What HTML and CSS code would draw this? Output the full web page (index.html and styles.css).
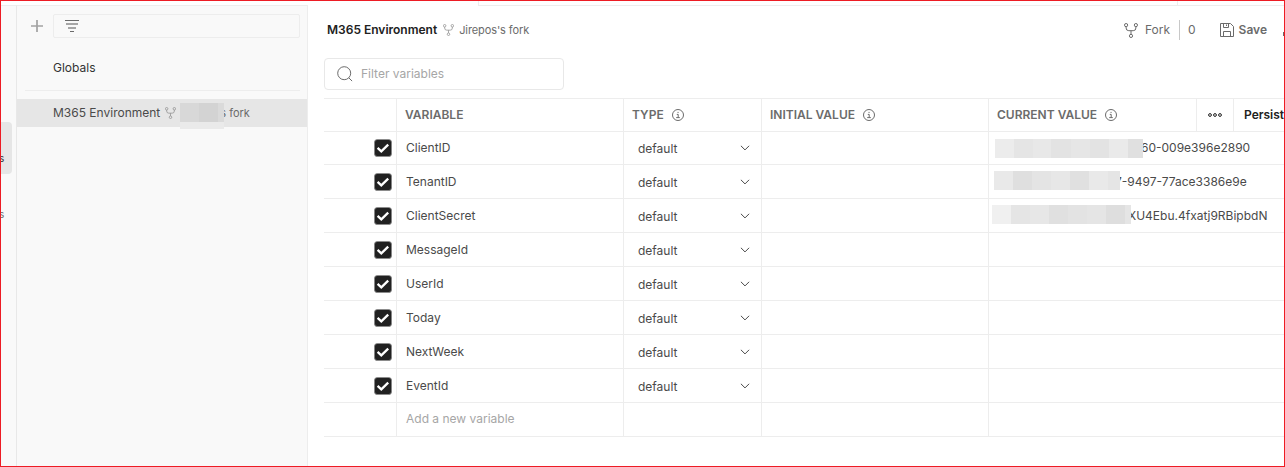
FILE: index.html
```html
<!DOCTYPE html>
<html lang="en">
<head>
<meta charset="utf-8">
<title>M365 Environment</title>
<link rel="stylesheet" href="styles.css">
</head>
<body>
<svg class="defs" aria-hidden="true">
  <symbol id="fork" viewBox="0 0 14 15"><g fill="none" stroke="currentColor"><circle cx="2.1" cy="2.1" r="1.6"/><circle cx="11.9" cy="2.1" r="1.6"/><circle cx="7" cy="12.9" r="1.6"/><path d="M2.1 3.7v1.3q0 2.7 2.7 2.7h4.4q2.7 0 2.7-2.7V3.7M7 7.7v3.6"/></g></symbol>
  <symbol id="info" viewBox="0 0 12 12"><g fill="none" stroke="currentColor"><circle cx="6" cy="6" r="5.5"/><path d="M4.8 5.4h1.4v3M4.2 8.6h3.6"/><path d="M5.5 3.4h1.1"/></g></symbol>
  <symbol id="chevron" viewBox="0 0 10 6"><path d="M.9.8 5 4.9 9.1.8" fill="none" stroke="currentColor"/></symbol>
  <symbol id="check" viewBox="0 0 18 18"><rect x=".4" y=".4" width="17.2" height="17.2" rx="3.2" fill="#212121" stroke="#8b8b8b" stroke-width=".8"/><path d="M3.6 8.9 7.3 12.4 14.2 5.6" fill="none" stroke="#fff" stroke-width="2.3"/></symbol>
</svg>
<div class="app">
  <aside class="rail">
    <div class="rail-item active">s</div>
    <div class="rail-item">s</div>
  </aside>
  <nav class="sidebar">
    <div class="tools">
      <svg class="plus" viewBox="0 0 12 12"><path d="M6 0v12M0 6h12" stroke="#a2a2a2" stroke-width="1.7"/></svg>
      <div class="side-filter"><svg width="14" height="12" viewBox="0 0 14 12"><path d="M0 .5h14M5 11.5h4" stroke="#6b6b6b"/><path d="M1 4h12M3 8h8" stroke="#a6a6a6" stroke-width="2"/></svg></div>
    </div>
    <div class="globals">Globals</div>
    <div class="env"><span>M365 Environment</span><svg class="fork-sm"><use href="#fork"/></svg><span class="fork-name">s fork</span>
      <div class="mask side-mask"><i class="a"></i><i class="b"></i><i class="c"></i></div></div>
  </nav>
  <main class="main">
    <div class="tabs"><div class="tab current"></div><div class="tab wide"></div><div class="tab rest"></div></div>
    <header class="head">
      <h1>M365 Environment</h1><svg class="fork-sm"><use href="#fork"/></svg><span class="owner">Jirepos's fork</span>
      <div class="actions">
        <svg class="fork-lg"><use href="#fork"/></svg><span class="fork-label">Fork</span><span class="count">0</span>
        <svg class="save-icon" viewBox="0 0 14 14"><path d="M.5.5h10L13.5 3.5v10H.5zM3.5.5v4h5v-4M3.5 13.5v-5h7v5M6.5 1.5v1.5" fill="none" stroke="#6b6b6b"/></svg><b>Save</b>
        <span class="sliver"></span>
      </div>
    </header>
    <div class="search"><svg viewBox="0 0 16 16"><circle cx="7.2" cy="7.2" r="6.5"/><path d="m11.8 11.8 3.3 3.3"/></svg>Filter variables</div>
    <section class="table">
      <div class="row header"><div></div><div>VARIABLE</div><div>TYPE<svg class="info"><use href="#info"/></svg></div><div>INITIAL VALUE<svg class="info"><use href="#info"/></svg></div><div class="last">CURRENT VALUE<svg class="info"><use href="#info"/></svg><span class="more"><svg width="14" height="4" viewBox="0 0 14 4" fill="none" stroke="#212121"><circle cx="2" cy="2" r="1.4"/><circle cx="7" cy="2" r="1.4"/><circle cx="12" cy="2" r="1.4"/></svg></span><span class="persist">Persist</span></div></div>
      <div class="row first"><div class="tick"><svg><use href="#check"/></svg></div><div class="name">ClientID</div><div class="type">default<svg><use href="#chevron"/></svg></div><div></div><div class="value v1"><span>60-009e396e2890</span><div class="mask"></div></div></div>
      <div class="row"><div class="tick"><svg><use href="#check"/></svg></div><div class="name">TenantID</div><div class="type">default<svg><use href="#chevron"/></svg></div><div></div><div class="value v2"><span>7-9497-77ace3386e9e</span><div class="mask"></div></div></div>
      <div class="row"><div class="tick"><svg><use href="#check"/></svg></div><div class="name">ClientSecret</div><div class="type">default<svg><use href="#chevron"/></svg></div><div></div><div class="value v3"><span>XU4Ebu.4fxatj9RBipbdN</span><div class="mask"></div></div></div>
      <div class="row"><div class="tick"><svg><use href="#check"/></svg></div><div class="name">MessageId</div><div class="type">default<svg><use href="#chevron"/></svg></div><div></div><div></div></div>
      <div class="row"><div class="tick"><svg><use href="#check"/></svg></div><div class="name">UserId</div><div class="type">default<svg><use href="#chevron"/></svg></div><div></div><div></div></div>
      <div class="row"><div class="tick"><svg><use href="#check"/></svg></div><div class="name">Today</div><div class="type">default<svg><use href="#chevron"/></svg></div><div></div><div></div></div>
      <div class="row"><div class="tick"><svg><use href="#check"/></svg></div><div class="name">NextWeek</div><div class="type">default<svg><use href="#chevron"/></svg></div><div></div><div></div></div>
      <div class="row"><div class="tick"><svg><use href="#check"/></svg></div><div class="name">EventId</div><div class="type">default<svg><use href="#chevron"/></svg></div><div></div><div></div></div>
      <div class="row"><div></div><div class="name add">Add a new variable</div><div></div><div></div><div></div></div>
    </section>
  </main>
</div>
</body>
</html>
```
FILE: styles.css
```css
* { box-sizing: border-box; }
body { margin: 0; font: 12px/16px Inter, "Liberation Sans", sans-serif; color: #4a4a4a; background: #fff; }
svg { display: block; flex: none; }
.defs { position: absolute; width: 0; height: 0; }
.app { display: flex; width: 1285px; height: 467px; border: 1px solid #ed1c24; overflow: hidden; }
.rail { width: 16px; margin-top: 4px; border-top: 1px solid #ededed; border-right: 1px solid #e8e8e8; background: #f9f9f9; padding-top: 116px; flex: none; }
.rail-item { height: 52px; width: 11px; padding-top: 29px; font-size: 10px; line-height: 14px; text-indent: -2px; overflow: hidden; color: #6b6b6b; }
.rail-item.active { background: #e6e6e6; border-radius: 0 4px 4px 0; color: #333; }
.rail-item + .rail-item { margin-top: 4px; }
.sidebar { width: 291px; flex: none; margin-top: 4px; border-top: 1px solid #ededed; border-right: 1px solid #ededed; background: #f9f9f9; }
.tools { display: flex; align-items: center; padding: 8px 7px 0 14px; }
.plus { width: 12px; height: 12px; margin-right: 10px; }
.side-filter { flex: 1; height: 24px; border: 1px solid #ededed; border-radius: 2px; padding: 5px 11px; }
.globals { margin: 0 7px 0 8px; padding: 22px 0 14px 28px; height: 53px; border-bottom: 1px solid #ededed; color: #333; }
.env { position: relative; display: flex; align-items: center; height: 28px; margin-top: 8px; padding-left: 36px; background: #e6e6e6; }
.fork-sm { width: 11px; height: 12px; margin-left: 5px; color: #929292; }
.fork-name { margin-left: 44px; font-size: 11px; color: #6b6b6b; }
.mask { position: absolute; }
.side-mask { left: 163px; top: 4px; width: 44px; height: 26px; display: flex; background: #eaeaea; }
.side-mask i { height: 19px; }
.side-mask .a { width: 19px; background: #d8d8d8; }
.side-mask .b { width: 19px; background: #d3d3d3; }
.side-mask .c { width: 6px; background: #dadada; }
.main { flex: 1; min-width: 0; }
.tabs { display: flex; height: 5px; }
.tab.current { width: 171px; border-right: 1px solid #ededed; }
.tab.wide { width: 699px; border-right: 1px solid #ededed; border-bottom: 1px solid #ededed; }
.tab.rest { flex: 1; border-bottom: 1px solid #ededed; }
.head { display: flex; align-items: center; height: 48px; padding-left: 19px; }
h1 { margin: 0; font-size: 12px; font-weight: 600; color: #212121; }
.head > .fork-sm { margin-left: 6px; }
.owner { margin-left: 5px; font-size: 11px; letter-spacing: -.1px; color: #6b6b6b; }
.actions { display: flex; align-items: center; margin-left: auto; color: #6b6b6b; }
.fork-lg { width: 14px; height: 15px; margin-right: 7px; }
.count { margin-left: 9px; padding: 2px 0 2px 8px; border-left: 1px solid #c8c8c8; }
.save-icon { width: 14px; height: 14px; margin-left: 24px; margin-right: 5px; }
.actions b { font-weight: 600; }
.sliver { width: 1px; height: 4px; margin: 8px 0 0 16px; background: #6b6b6b; }
.search { display: flex; align-items: center; width: 240px; height: 32px; margin: 4px 0 8px 16px; padding-left: 12px; border: 1px solid #e8e8e8; border-radius: 4px; color: #a6a6a6; }
.search svg { width: 16px; height: 16px; margin-right: 8px; fill: none; stroke: #6b6b6b; }
.table { margin-left: 16px; border-top: 1px solid #ededed; }
.row { display: grid; grid-template-columns: 73px 227px 138px 227px 1fr; height: 34px; border-bottom: 1px solid #ededed; }
.row.header, .row.first { height: 33px; }
.row > div { display: flex; align-items: center; min-width: 0; border-right: 1px solid #ededed; white-space: nowrap; }
.row > div:last-child { border-right: 0; }
.row.header > div { padding-left: 8px; font-weight: 600; color: #6b6b6b; }
.info { width: 12px; height: 12px; margin-left: 8px; }
.row .tick { padding-left: 50px; }
.tick svg { width: 18px; height: 18px; }
.row .name { padding-left: 9px; }
.row .add { padding-bottom: 2px; color: #a6a6a6; }
.row .type { padding: 2px 11px 0 14px; justify-content: space-between; }
.row.first .type { padding-top: 1px; }
.type svg { width: 10px; height: 6px; margin-bottom: 1px; }
.row .last { align-items: stretch; line-height: 32px; }
.last .info { align-self: center; }
.more { width: 38px; margin-left: auto; border: solid #ededed; border-width: 0 1px; display: flex; align-items: center; justify-content: center; }
.persist { width: 50px; padding-left: 10px; color: #212121; }
.row .value { position: relative; }
.value .mask { height: 19px; }
.v1 span { margin-left: 152px; }
.v2 span { margin-left: 126px; }
.v3 span { margin-left: 139px; }
.v1 .mask { left: 6px; top: 7px; width: 148px; background: linear-gradient(90deg, #ececec 0 19px, #e5e5e5 19px 38px, #e8e8e8 38px 56px, #e3e3e3 56px 76px, #e6e6e6 76px 95px, #e3e3e3 95px 114px, #eaeaea 114px 133px, #e0e0e0 133px); }
.v2 .mask { left: 5px; top: 6px; width: 126px; background: linear-gradient(90deg, #e9e9e9 0 19px, #dfdfdf 19px 38px, #e4e4e4 38px 57px, #e7e7e7 57px 76px, #e0e0e0 76px 95px, #e9e9e9 95px 114px, #e5e5e5 114px); }
.v3 .mask { left: 3px; top: 6px; width: 139px; background: linear-gradient(90deg, #f0f0f0 0 19px, #e5e5e5 19px 38px, #e7e7e7 38px 57px, #e0e0e0 57px 76px, #e3e3e3 76px 95px, #e5e5e5 95px 114px, #dedede 114px 133px, #e5e5e5 133px); }
```
